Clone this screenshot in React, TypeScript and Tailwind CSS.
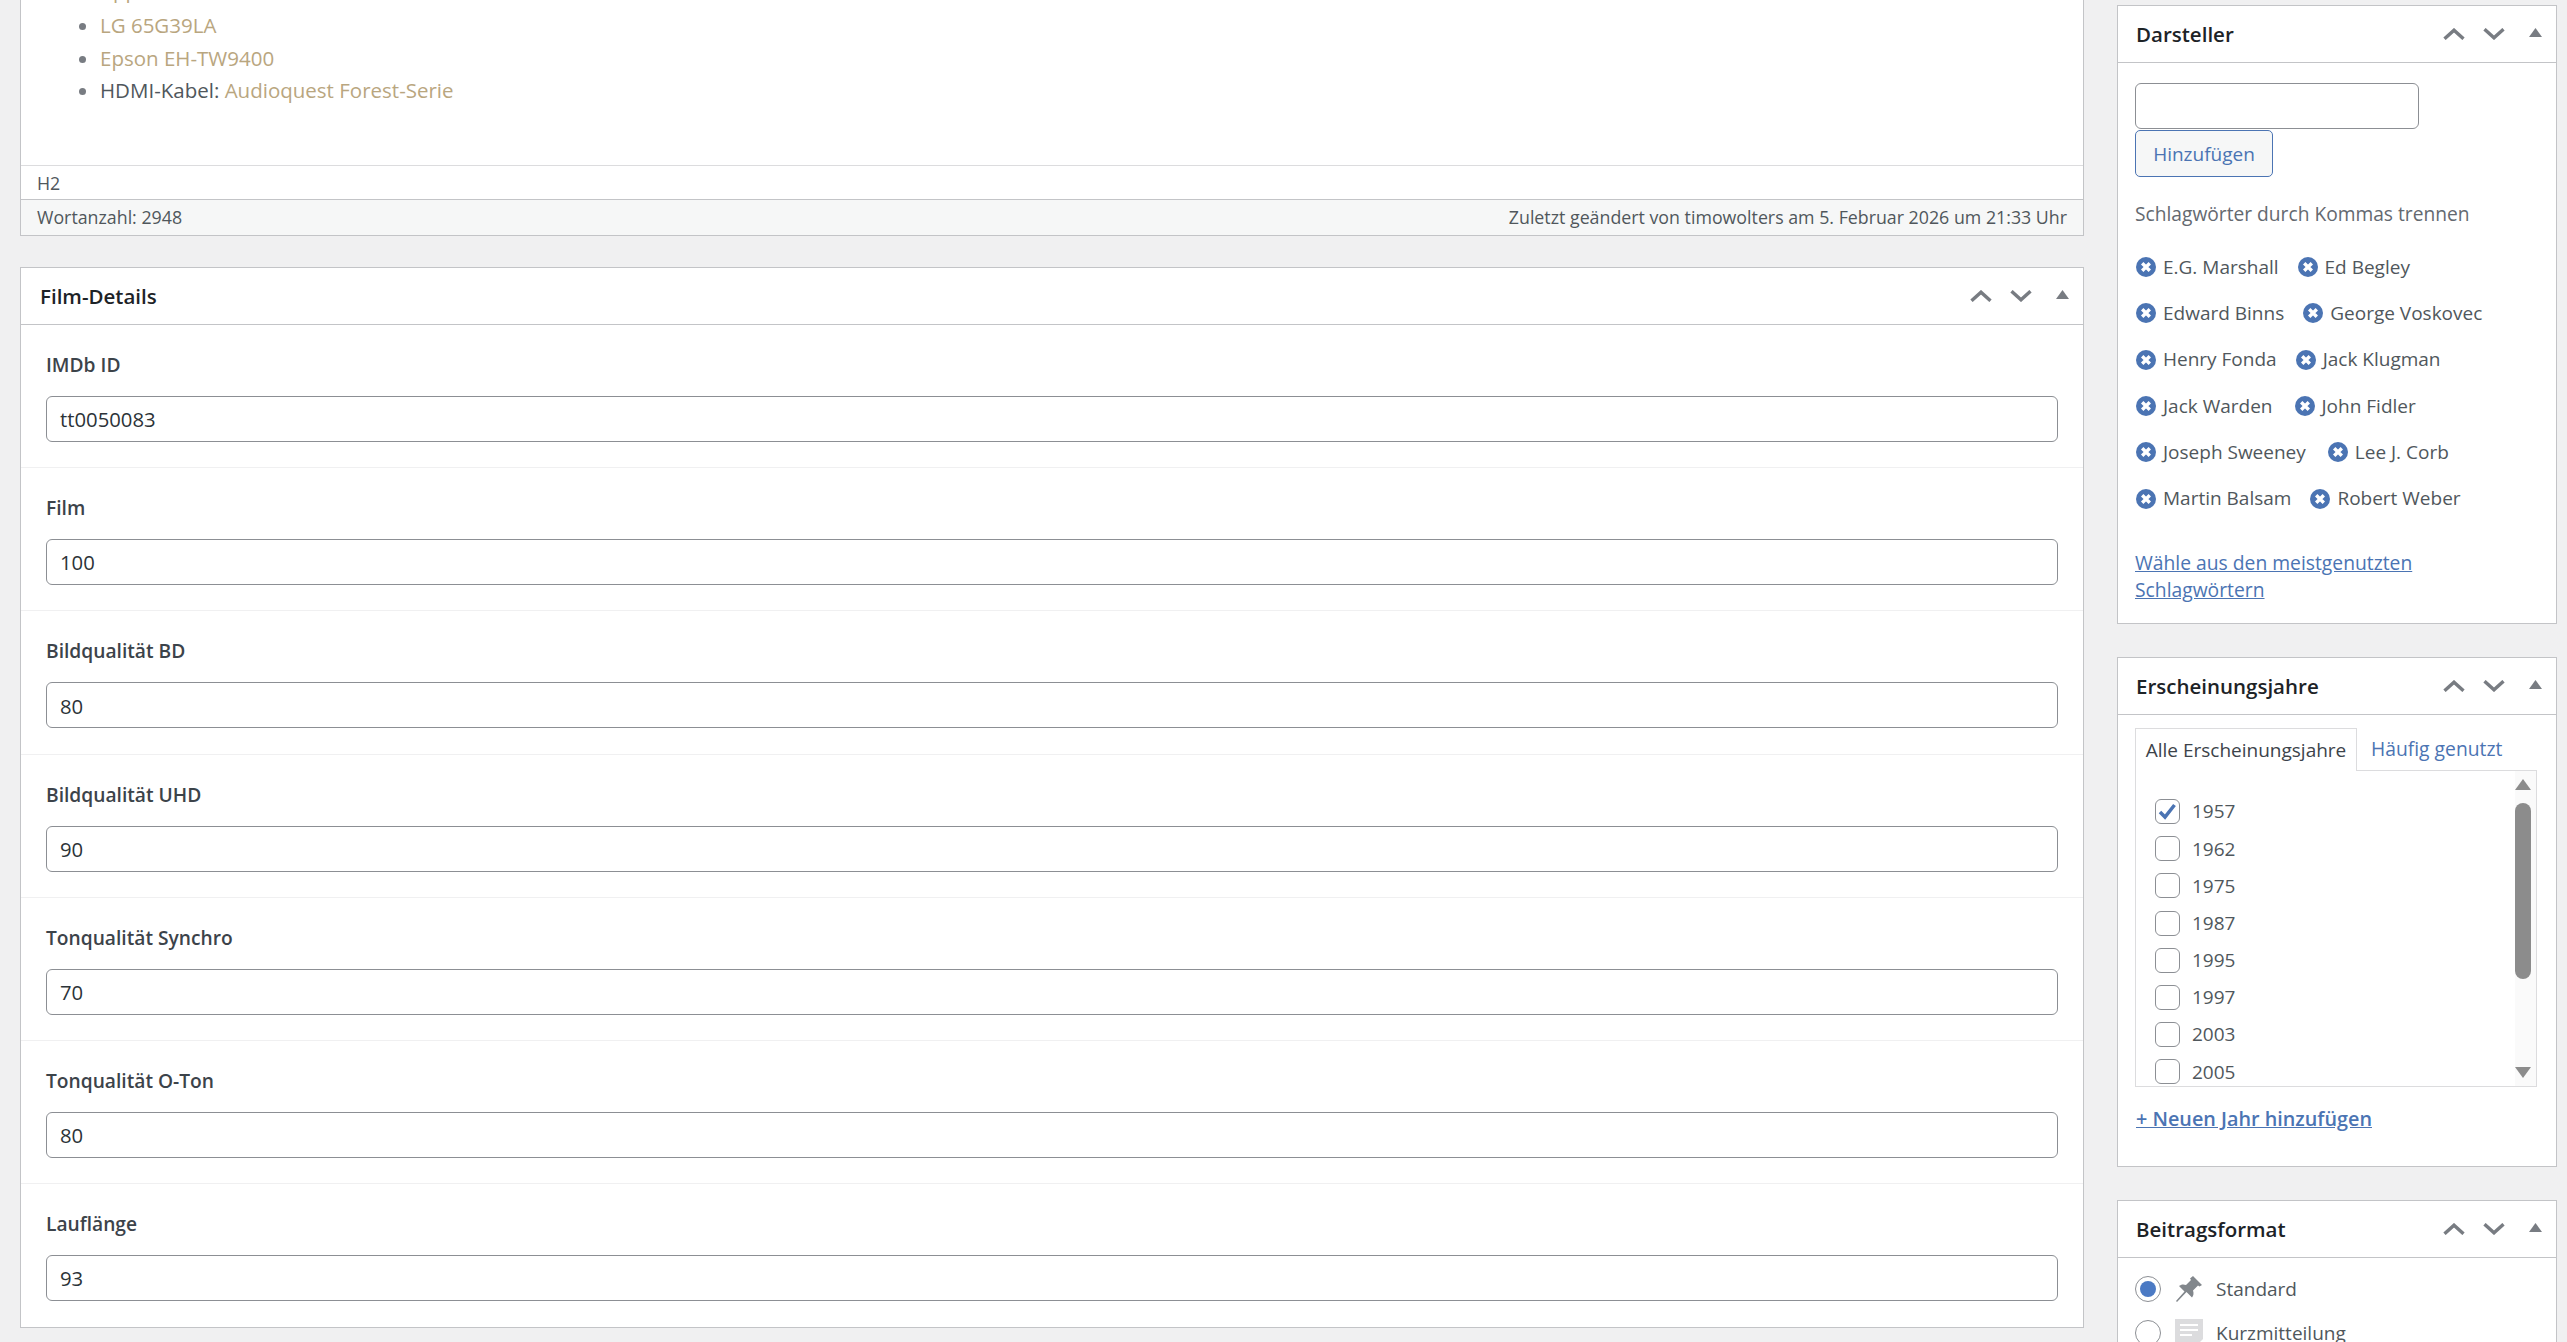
import React from "react";

const font = "font-['Open_Sans','Noto_Sans',sans-serif]";

function Actions() {
  return (
    <div className="flex items-center">
      <svg width="22" height="12" viewBox="0 0 22 12" className="mr-[18px]"><path d="M1.500 10.800 11 2.200l9.500 8.600" fill="none" stroke="#787c82" strokeWidth="3.4" /></svg>
      <svg width="22" height="12" viewBox="0 0 22 12" className="mr-[24px]"><path d="M1.500 1.200 11 9.800l9.500-8.600" fill="none" stroke="#787c82" strokeWidth="3.4" /></svg>
      <svg width="13" height="9" viewBox="0 0 13 9" className="mb-[3px]"><path d="M6.500 0 13 9H0z" fill="#787c82" /></svg>
    </div>
  );
}

function Header({ title, big }: { title: string; big?: boolean }) {
  return (
    <div className={`flex h-[57px] items-center justify-between border-b border-[#c3c4c7] pr-[14px] ${big ? "pl-[19px]" : "pl-[18px]"}`}>
      <h2 className="pt-[1px] text-[20.500px] font-semibold text-[#1d2327]">{title}</h2>
      <Actions />
    </div>
  );
}

function Field({ label, value, last }: { label: string; value: string; last?: boolean }) {
  return (
    <div className={`flex h-[143.200px] flex-col px-[25px] pt-[25px] ${last ? "" : "border-b border-[#f0f0f1]"}`}>
      <label className="h-[30px] text-[19.200px] leading-[30px] font-semibold text-[#3c434a]">{label}</label>
      <div className="mt-[16px] flex h-[46px] items-center rounded-[6px] border border-[#8c8f94] px-[13px] pt-[1px] text-[20.300px] text-[#2c3338]">{value}</div>
    </div>
  );
}

function Tag({ name, wide }: { name: string; wide?: boolean }) {
  return (
    <span className={`flex items-center ${wide ? "mr-[22px]" : "mr-[19px]"}`}>
      <svg width="20" height="20" viewBox="0 0 20 20" className="mr-[7px]">
        <circle cx="10" cy="10" r="10" fill="#4b74b3" />
        <path d="M6.200 6.200l7.600 7.600M13.800 6.200l-7.600 7.600" stroke="#fff" strokeWidth="3.400" />
      </svg>
      <span className="text-[19px] text-[#50575c]">{name}</span>
    </span>
  );
}

function Year({ y, checked }: { y: string; checked?: boolean }) {
  return (
    <div className="flex h-[37.200px] shrink-0 items-center pl-[19px]">
      <span className="mr-[12px] flex h-[25px] w-[25px] items-center justify-center rounded-[6px] border border-[#8c8f94] bg-white">
        {checked && (
          <svg width="19" height="17" viewBox="0 0 19 17"><path d="M2 9l5 5L16.500 2" fill="none" stroke="#4b74b3" strokeWidth="3.500" /></svg>
        )}
      </span>
      <span className="text-[19px] text-[#50575c]">{y}</span>
    </div>
  );
}

export default function App() {
  const tags = [
    ["E.G. Marshall", "Ed Begley"],
    ["Edward Binns", "George Voskovec"],
    ["Henry Fonda", "Jack Klugman"],
    ["Jack Warden", "John Fidler"],
    ["Joseph Sweeney", "Lee J. Corb"],
    ["Martin Balsam", "Robert Weber"],
  ];
  return (
    <div className={`${font} flex h-[1342px] w-[2567px] overflow-hidden bg-[#f0f0f1] text-[19px] text-[#3c434a]`}>
      {/* Main column */}
      <main className="ml-[20px] w-[2064px] shrink-0">
        <section className="h-[236px] border-x border-b border-[#c3c4c7] bg-white">
          <div className="h-[166px] overflow-hidden border-b border-[#dcdcde]">
            <ul className="mt-[-26.500px] ml-[59px] list-disc pl-[20px] text-[20.500px] leading-[32.500px] text-[#50575c] marker:text-[#787c82]">
              <li className="mb-[3px] text-[#b9a67f]">Apple TV 4K</li>
              <li className="text-[#b9a67f]">LG 65G39LA</li>
              <li className="text-[#b9a67f]">Epson EH-TW9400</li>
              <li>HDMI-Kabel: <span className="text-[#b9a67f]">Audioquest Forest-Serie</span></li>
            </ul>
          </div>
          <div className="flex h-[33px] items-center pt-[1px] pl-[16px] text-[17.800px] text-[#50575c]">H2</div>
          <div className="flex h-[36px] items-center justify-between border-t border-[#c3c4c7] bg-[#f6f7f7] px-[16px] text-[17.800px] text-[#50575c]">
            <span>Wortanzahl: 2948</span>
            <span>Zuletzt geändert von timowolters am 5. Februar 2026 um 21:33 Uhr</span>
          </div>
        </section>
        <section className="mt-[31px] border border-[#c3c4c7] bg-white">
          <Header title="Film-Details" big />
          <Field label="IMDb ID" value="tt0050083" />
          <Field label="Film" value="100" />
          <Field label="Bildqualität BD" value="80" />
          <Field label="Bildqualität UHD" value="90" />
          <Field label="Tonqualität Synchro" value="70" />
          <Field label="Tonqualität O-Ton" value="80" />
          <Field label="Lauflänge" value="93" last />
        </section>
      </main>

      {/* Sidebar */}
      <aside className="ml-[33px] w-[440px] shrink-0 pt-[5px]">
        <section className="h-[619px] border border-[#c3c4c7] bg-white">
          <Header title="Darsteller" />
          <div className="px-[17px]">
            <div className="mt-[20px] h-[46px] w-[284px] rounded-[6px] border border-[#8c8f94]" />
            <button className="mt-[1px] block h-[47px] w-[138px] rounded-[5px] border border-[#4b74b3] bg-[#f6f7f7] pt-[2px] text-[19px] text-[#4b74b3]">Hinzufügen</button>
            <p className="mt-[22px] h-[30px] text-[19.200px] leading-[30px] text-[#646970]">Schlagwörter durch Kommas trennen</p>
            <div className="mt-[15px] flex flex-col">
              {tags.map((r) => (
                <div key={r[0]} className="flex h-[46.300px] items-center pl-[1px]">
                  <Tag name={r[0]} wide={r[0].startsWith("J")} />
                  <Tag name={r[1]} />
                </div>
              ))}
            </div>
            <a className="mt-[27px] block text-[19.300px] leading-[27px] text-[#4b74b3] underline">Wähle aus den meistgenutzten Schlagwörtern</a>
          </div>
        </section>

        <section className="mt-[33px] h-[510px] border border-[#c3c4c7] bg-white">
          <Header title="Erscheinungsjahre" />
          <div className="px-[17px]">
            <div className="mt-[13px] flex h-[43px]">
              <div className="relative z-10 flex h-[43px] w-[222px] items-center justify-center border-x border-t border-[#dcdcde] bg-white text-[19px] text-[#3c434a]">Alle Erscheinungsjahre</div>
              <div className="flex items-center pl-[14px] text-[19.300px] text-[#4b74b3]">Häufig genutzt</div>
            </div>
            <div className="relative -mt-px flex h-[317px] w-[402px] flex-col overflow-hidden border border-[#dcdcde] pt-[22px]">
              <Year y="1957" checked />
              <Year y="1962" />
              <Year y="1975" />
              <Year y="1987" />
              <Year y="1995" />
              <Year y="1997" />
              <Year y="2003" />
              <Year y="2005" />
              {/* scrollbar */}
              <div className="absolute top-0 right-0 bottom-0 w-[21px] bg-[#fafafa]">
                <svg width="16" height="12" viewBox="0 0 16 12" className="absolute top-[8px] left-[0px]"><path d="M8 0l8 11H0z" fill="#8c8c8c" /></svg>
                <div className="absolute top-[32px] left-0 h-[176px] w-[16px] rounded-[8px] bg-[#8c8c8c]" />
                <svg width="16" height="12" viewBox="0 0 16 12" className="absolute bottom-[7px] left-0"><path d="M8 11l8-11H0z" fill="#8c8c8c" /></svg>
              </div>
            </div>
            <a className="mt-[17px] block pl-[1px] text-[19.800px] leading-[30px] font-semibold text-[#4b74b3] underline">+ Neuen Jahr hinzufügen</a>
          </div>
        </section>

        <section className="mt-[33px] border border-[#c3c4c7] bg-white">
          <Header title="Beitragsformat" />
          <div className="px-[17px] pt-[18px]">
            <div className="flex h-[26px] items-center">
              <span className="flex h-[26px] w-[26px] items-center justify-center rounded-full border border-[#8c8f94]">
                <span className="h-[16px] w-[16px] rounded-full bg-[#4b7ac4]" />
              </span>
              <svg width="28" height="28" viewBox="0 0 28 28" className="mr-[13px] ml-[14px]">
                <path d="M18 1l9 9-2.500 1.500-1.500-1-5 5c1 3 .5 5-1 7l-5.500-5.500L2 27l-1-1 8.500-9.500L4 11c2-1.500 4-2 7-1l5-5-1-1.500z" fill="#82878c" />
              </svg>
              <span className="text-[19px] text-[#50575c]">Standard</span>
            </div>
            <div className="mt-[18px] flex h-[26px] items-center">
              <span className="h-[26px] w-[26px] shrink-0 rounded-full border border-[#8c8f94]" />
              <svg width="28" height="28" viewBox="0 0 28 28" className="mr-[13px] ml-[14px] shrink-0">
                <path d="M0 0h28v20l-8 8H0z" fill="#dcdcde" />
                <path d="M5 6h18M5 11h18M5 16h12" stroke="#fff" strokeWidth="2" />
              </svg>
              <span className="text-[19px] text-[#50575c]">Kurzmitteilung</span>
            </div>
          </div>
        </section>
      </aside>
    </div>
  );
}
